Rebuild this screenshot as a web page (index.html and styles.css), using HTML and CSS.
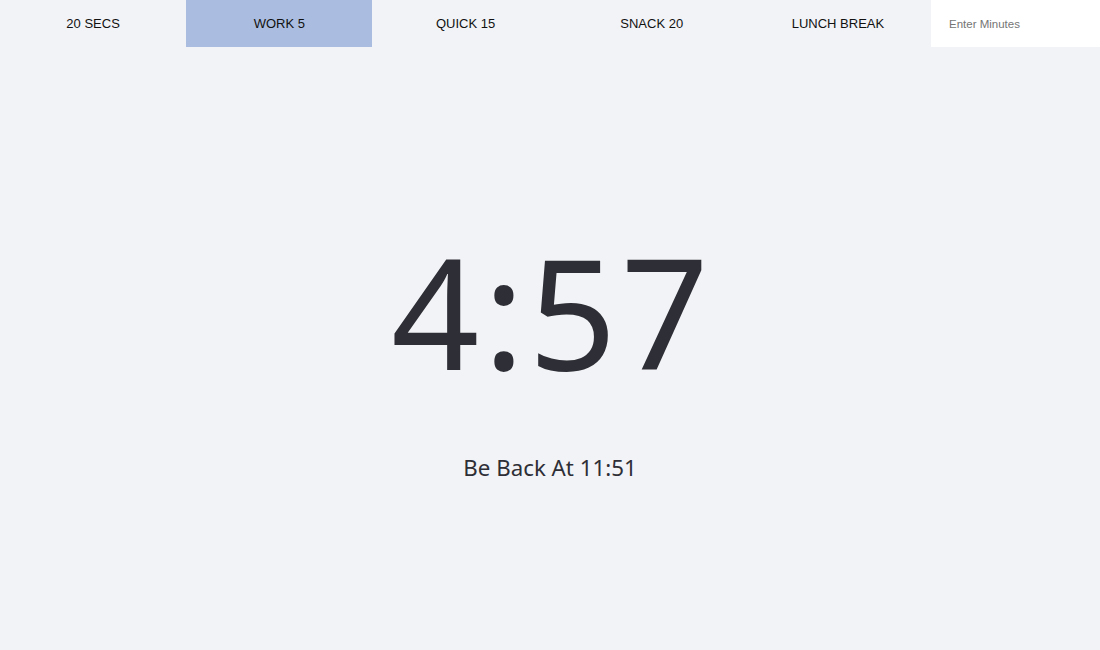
FILE: index.html
```html
<!DOCTYPE html>
<html>
<head>
<meta charset="utf-8">
<link rel="stylesheet" href="styles.css">
</head>
<body>
<nav class="nav">
  <button class="nav-btn">20 SECS</button>
  <button class="nav-btn active">WORK 5</button>
  <button class="nav-btn">QUICK 15</button>
  <button class="nav-btn">SNACK 20</button>
  <button class="nav-btn">LUNCH BREAK</button>
  <input class="nav-input" type="text" placeholder="Enter Minutes">
</nav>
<main class="main">
  <div class="timer">4:57</div>
  <div class="back">Be Back At 11:51</div>
</main>
</body>
</html>
```
FILE: styles.css
```css
html, body {
  margin: 0;
  padding: 0;
  background: #f2f3f7;
  height: 100%;
}
body {
  font-family: "Noto Sans", sans-serif;
  color: #2e2f36;
}
.nav {
  display: flex;
  height: 47px;
}
.nav-btn {
  flex: 1;
  border: none;
  background: transparent;
  font-family: "Liberation Sans", Arial, sans-serif;
  font-size: 13px;
  color: #111;
  padding: 0;
  margin: 0;
}
.nav-btn.active {
  background: #aabde0;
}
.nav-input {
  width: 169px;
  box-sizing: border-box;
  border: none;
  background: #fff;
  padding: 0 18px;
  font-family: "Liberation Sans", Arial, sans-serif;
  font-size: 11.5px;
  outline: none;
}
.nav-input::placeholder {
  color: #757575;
}
.main {
  display: flex;
  flex-direction: column;
  align-items: center;
}
.timer {
  margin-top: 186px;
  font-size: 154px;
  line-height: 1;
  letter-spacing: 4px;
  padding-left: 4px;
}
.back {
  margin-top: 70px;
  font-size: 22.3px;
  line-height: 1;
}
```
